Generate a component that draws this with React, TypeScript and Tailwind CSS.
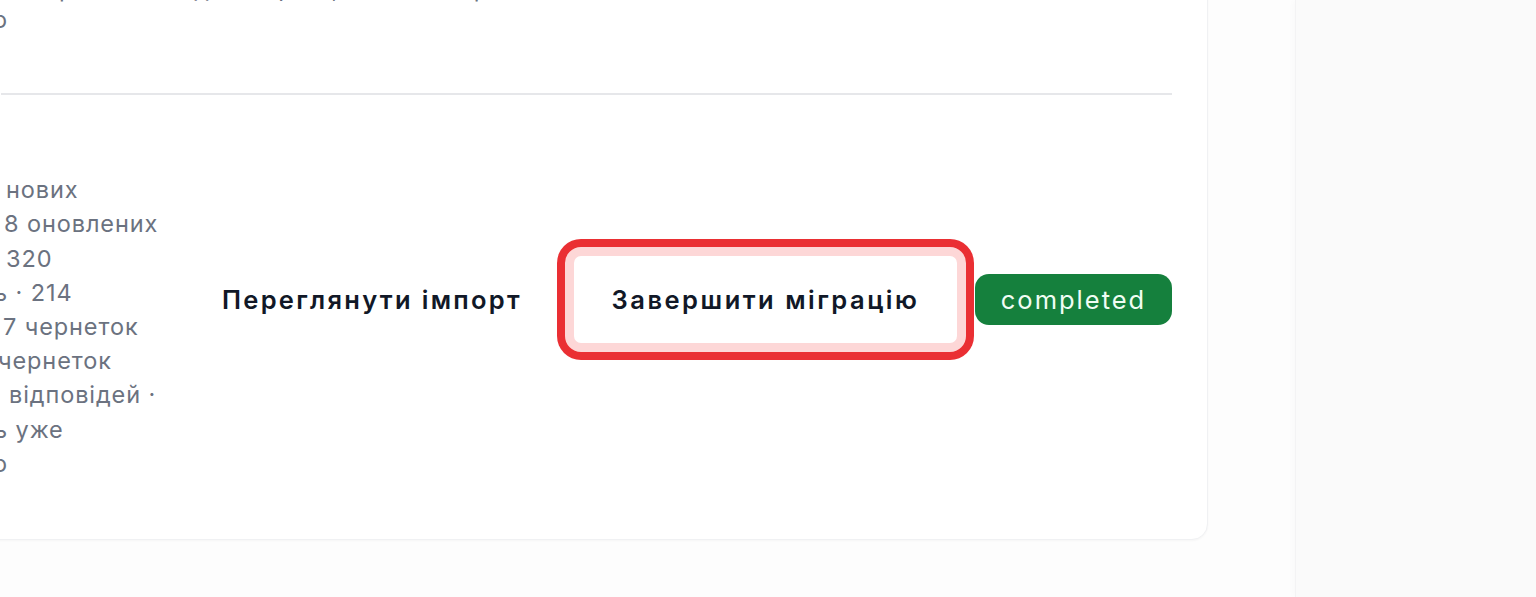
import React from 'react'

const font = { fontFamily: 'Inter, "Noto Sans", sans-serif' }

const statLines: { text: string; cls: string }[] = [
  { text: 'нових', cls: 'pl-[5px]' },
  { text: '8 оновлених', cls: 'pl-[3px]' },
  { text: '320', cls: 'pl-[5px]' },
  { text: 'ь · 214', cls: '-ml-[7px]' },
  { text: '7 чернеток', cls: 'pl-[2px]' },
  { text: 'чернеток', cls: '-ml-[3px]' },
  { text: 'відповідей ·', cls: 'pl-[8px]' },
  { text: 'ь уже', cls: '-ml-[7px]' },
  { text: 'о', cls: '-ml-[8px]' },
]

export default function App() {
  return (
    <div className="flex min-h-screen h-[597px] overflow-hidden bg-[#fdfdfd]" style={font}>
      <main className="flex-1 min-w-0 pr-[87px]">
        <div className="-ml-6 -mt-[38px] pl-6 pr-[35px] bg-white border border-[#f0f1f3] rounded-[16px] shadow-[0_1px_2px_rgba(0,0,0,0.03)]">
          {/* previous row, mostly scrolled out of view */}
          <div className="pt-[12px] pb-[56px] text-[23.5px] tracking-[0.9px] text-[#6b7280] whitespace-nowrap">
            <div className="pl-[2px] leading-[28px]">Імпорт містить дані з фото, які вже оброблено</div>
            <div className="-ml-[8px] leading-[34.2px]">о</div>
          </div>

          <div className="h-[2px] bg-[#e6e7ea]" />

          {/* current row */}
          <div className="flex items-start justify-between pt-[78px] pb-[58px]">
            <div className="w-[170px] text-[23.5px] leading-[34.2px] tracking-[0.9px] text-[#6b7280] whitespace-nowrap">
              {statLines.map((l, i) => (
                <div key={i} className={l.cls}>
                  {l.text}
                </div>
              ))}
            </div>

            <div className="flex items-center gap-[9px] mt-[74px]">
              <button className="px-[34px] h-[105px] text-[25.5px] tracking-[2.3px] font-semibold text-[#111827] whitespace-nowrap">
                Переглянути імпорт
              </button>
              <button className="w-[401px] h-[105px] flex items-center justify-center bg-white border-[9px] border-[#fdd7d7] rounded-[16px] shadow-[0_0_0_8px_#ea2f33] text-[25.5px] tracking-[2.5px] font-semibold text-[#111827] whitespace-nowrap">
                Завершити міграцію
              </button>
              <span className="w-[197px] h-[51px] flex items-center justify-center rounded-[14px] bg-[#15803d] text-[25.5px] tracking-[2px] text-[#f0fdf4] whitespace-nowrap">
                completed
              </span>
            </div>
          </div>
        </div>
      </main>

      <aside className="w-[241px] shrink-0 bg-[#fafafa] border-l border-[#f3f3f4] shadow-[-2px_0_6px_rgba(0,0,0,0.02)]" />
    </div>
  )
}
